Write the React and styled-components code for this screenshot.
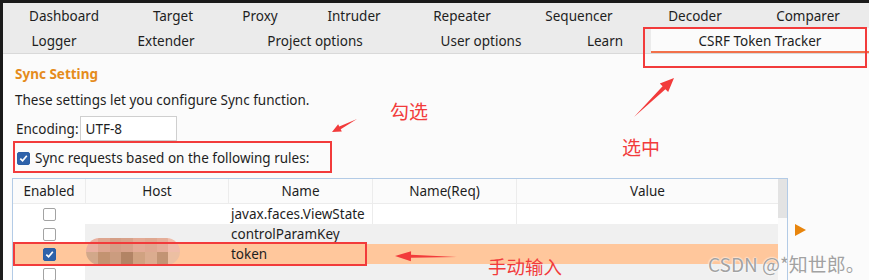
import React from "react"
import styled, { createGlobalStyle } from "styled-components"

const GlobalStyle = createGlobalStyle`
  html, body {
    margin: 0;
    padding: 0;
    overflow: hidden;
    background: #1a1a1a;
  }
`

const UI = `"Noto Sans", "Open Sans", sans-serif`
const CJK = `"Noto Sans CJK SC", "Noto Sans", sans-serif`
const RED = "#f23b3b"

const Page = styled.div`
  position: relative;
  width: 869px;
  height: 280px;
  box-sizing: border-box;
  padding: 3px 0 0 3px;
  background: #1a1a1a;
  overflow: hidden;
`

const Screen = styled.div`
  width: 866px;
  height: 277px;
  background: #fbfbfb;
  font-family: ${UI};
  color: #1e1e1e;
  display: flex;
  flex-direction: column;
`

const TabStrip = styled.div`
  background: #ebebeb;
  border-bottom: 1px solid #d9d9d9;
  display: flex;
  flex-direction: column;
`

const TabRow = styled.div`
  display: grid;
  grid-template-columns: ${(p) => p.$cols};
  height: 25px;
`

const Tab = styled.div`
  display: flex;
  align-items: center;
  justify-content: center;
  font-size: 13.5px;
  background: ${(p) => (p.$active ? "#fbfbfb" : "transparent")};
  box-sizing: border-box;
  border-bottom: 2px solid ${(p) => (p.$active ? "#f27049" : "transparent")};
  padding-top: 2px;
`

const Content = styled.div`
  display: flex;
  flex-direction: column;
  padding-left: 12px;
`

const SectionTitle = styled.div`
  margin-top: 10px;
  line-height: 20px;
  font-size: 13.5px;
  font-weight: 700;
  color: #e58c1c;
`

const Description = styled.div`
  margin-top: 6px;
  line-height: 20px;
  font-size: 13.5px;
`

const FieldRow = styled.div`
  margin-top: 6px;
  height: 25px;
  display: flex;
  align-items: center;
  font-size: 13.5px;
  padding-left: 1px;
`

const TextInput = styled.div`
  width: 97px;
  height: 25px;
  box-sizing: border-box;
  border: 1px solid #cfcfcf;
  background: #fff;
  display: flex;
  align-items: center;
  padding-left: 5px;
  margin-left: 1px;
`

const CheckRow = styled.label`
  margin-top: 7px;
  height: 20px;
  display: flex;
  align-items: center;
  gap: 5px;
  font-size: 13.5px;
  padding-left: 2px;
`

const Box = styled.span`
  width: 13px;
  height: 13px;
  box-sizing: border-box;
  border-radius: 2px;
  border: 1px solid ${(p) => (p.$checked ? "#2b5fa6" : "#a3a3a3")};
  background: ${(p) => (p.$checked ? "#2e62aa" : "#fff")};
  display: inline-flex;
  align-items: center;
  justify-content: center;
  flex: none;
`

const TableArea = styled.div`
  margin-top: 10px;
  margin-left: -3px;
  display: flex;
  gap: 7px;
`

const Table = styled.div`
  width: 776px;
  height: 110px;
  box-sizing: border-box;
  border: 1px solid #b3cbe6;
  border-bottom: none;
  display: flex;
  background: #fbfbfb;
`

const Grid = styled.div`
  width: 765px;
  display: flex;
  flex-direction: column;
`

const Cols = "72px 143px 144px 144px 262px"

const HeaderRow = styled.div`
  display: grid;
  grid-template-columns: ${Cols};
  height: 25px;
  background: #fbfbfb;
  border-bottom: 1px solid #ececec;
  box-sizing: border-box;
`

const HeaderCell = styled.div`
  display: flex;
  align-items: center;
  justify-content: center;
  font-size: 13.5px;
  border-left: ${(p) => (p.$first ? "none" : "1px solid #ececec")};
`

const Row = styled.div`
  display: grid;
  grid-template-columns: ${Cols};
  height: 20px;
  background: ${(p) => (p.$selected ? "#ffc79c" : p.$striped ? "#f0f0f0" : "#ffffff")};
`

const Cell = styled.div`
  display: flex;
  align-items: center;
  justify-content: ${(p) => (p.$center ? "center" : "flex-start")};
  padding-left: ${(p) => (p.$center ? "0" : "3px")};
  font-size: 13.5px;
  background: ${(p) => (p.$plain ? "#ffffff" : "transparent")};
  border-left: ${(p) => (p.$line ? "1px solid #ececec" : "none")};
`

const Scrollbar = styled.div`
  width: 9px;
  display: flex;
  flex-direction: column;
`

const Thumb = styled.div`
  height: 39px;
  background: #e3e3e3;
`

const SideButtons = styled.div`
  padding-top: 46px;
`

const PlayArrow = styled.div`
  width: 0;
  height: 0;
  border-top: 6px solid transparent;
  border-bottom: 6px solid transparent;
  border-left: 11px solid #e8850c;
`

const Highlight = styled.div`
  position: absolute;
  left: ${(p) => p.$x}px;
  top: ${(p) => p.$y}px;
  width: ${(p) => p.$w}px;
  height: ${(p) => p.$h}px;
  box-sizing: border-box;
  border: 2px solid ${RED};
  pointer-events: none;
`

const Note = styled.div`
  position: absolute;
  left: ${(p) => p.$x}px;
  top: ${(p) => p.$y}px;
  font-family: ${CJK};
  font-size: ${(p) => p.$size || 19}px;
  line-height: 1;
  color: ${RED};
  white-space: nowrap;
`

const Watermark = styled.div`
  position: absolute;
  left: 708px;
  top: 254px;
  font-family: ${CJK};
  font-size: 19px;
  line-height: 1;
  color: #a2a2a2;
  text-shadow: 0 0 2px #fff, 0 0 2px #fff;
  white-space: nowrap;
`

const Mosaic = styled.div`
  position: absolute;
  left: 86px;
  top: 238px;
  width: 94px;
  height: 27px;
  border-radius: 14px;
  overflow: hidden;
  display: grid;
  grid-template-columns: repeat(8, 1fr);
  grid-template-rows: 1fr 1fr;
  filter: blur(0.4px);
`

const Tile = styled.div`
  background: ${(p) => p.$c};
`

const Overlay = styled.svg`
  position: absolute;
  left: 0;
  top: 0;
  pointer-events: none;
`

const mosaicColors = [
  "#eab0a0", "#dea690", "#d49f87", "#d8a28b", "#e3ab96", "#dfa891", "#e5ae99", "#f0bcaa",
  "#d2a88a", "#c39371", "#cb9c7f", "#b28465", "#d0a281", "#dbac8f", "#c29474", "#ecbfa2",
]

// tapered annotation arrow from tail to tip
const arrowPoints = (x1, y1, x2, y2, head, half, shaft) => {
  const dx = x2 - x1
  const dy = y2 - y1
  const len = Math.hypot(dx, dy)
  const ux = dx / len
  const uy = dy / len
  const nx = -uy
  const ny = ux
  const bx = x2 - ux * head
  const by = y2 - uy * head
  const pts = [
    [x1, y1],
    [bx + nx * shaft, by + ny * shaft],
    [bx + nx * half, by + ny * half],
    [x2, y2],
    [bx - nx * half, by - ny * half],
    [bx - nx * shaft, by - ny * shaft],
  ]
  return pts.map((p) => p.join(",")).join(" ")
}

const CheckMark = () => (
  <svg width="9" height="9" viewBox="0 0 9 9">
    <path d="M1.3 4.6 L3.6 6.8 L7.8 1.8" fill="none" stroke="#fff" strokeWidth="1.7" />
  </svg>
)

const Check = ({ checked }) => <Box $checked={checked}>{checked && <CheckMark />}</Box>

const rows = [
  { name: "javax.faces.ViewState", checked: false },
  { name: "controlParamKey", checked: false, striped: true },
  { name: "token", checked: true, selected: true },
  { name: "", checked: false, striped: true },
]

const App = () => {
  return (
    <Page>
      <GlobalStyle />
      <Screen>
        <TabStrip>
          <TabRow $cols="122px 96px 78px 110px 106px 128px 104px 122px">
            {["Dashboard", "Target", "Proxy", "Intruder", "Repeater", "Sequencer", "Decoder", "Comparer"].map((t) => (
              <Tab key={t}>{t}</Tab>
            ))}
          </TabRow>
          <TabRow $cols="102px 122px 176px 156px 92px 218px">
            {["Logger", "Extender", "Project options", "User options", "Learn"].map((t) => (
              <Tab key={t}>{t}</Tab>
            ))}
            <Tab $active>CSRF Token Tracker</Tab>
          </TabRow>
        </TabStrip>

        <Content>
          <SectionTitle>Sync Setting</SectionTitle>
          <Description>These settings let you configure Sync function.</Description>
          <FieldRow>
            Encoding:
            <TextInput>UTF-8</TextInput>
          </FieldRow>
          <CheckRow>
            <Check checked />
            Sync requests based on the following rules:
          </CheckRow>

          <TableArea>
            <Table>
              <Grid>
                <HeaderRow>
                  <HeaderCell $first>Enabled</HeaderCell>
                  <HeaderCell>Host</HeaderCell>
                  <HeaderCell>Name</HeaderCell>
                  <HeaderCell>Name(Req)</HeaderCell>
                  <HeaderCell>Value</HeaderCell>
                </HeaderRow>
                {rows.map((r, i) => (
                  <Row key={i} $striped={r.striped} $selected={r.selected}>
                    <Cell $center $plain={!r.selected}>
                      <Check checked={r.checked} />
                    </Cell>
                    <Cell />
                    <Cell>{r.name}</Cell>
                    <Cell $line={i === 0} />
                    <Cell $line={i === 0} />
                  </Row>
                ))}
              </Grid>
              <Scrollbar>
                <Thumb />
              </Scrollbar>
            </Table>
            <SideButtons>
              <PlayArrow />
            </SideButtons>
          </TableArea>
        </Content>
      </Screen>

      <Mosaic>
        {mosaicColors.map((c, i) => (
          <Tile key={i} $c={c} />
        ))}
      </Mosaic>

      <Highlight $x={643} $y={27} $w={224} $h={41} />
      <Highlight $x={13} $y={141} $w={319} $h={32} />
      <Highlight $x={13} $y={242} $w={354} $h={24} />

      <Overlay width="869" height="280">
        <polygon points={arrowPoints(357, 119, 332, 132, 9, 4, 1.5)} fill={RED} />
        <polygon points={arrowPoints(634, 117, 674, 78, 14, 6, 2)} fill={RED} />
        <polygon points={arrowPoints(457, 257, 395, 256, 16, 5, 1.5)} fill={RED} />
      </Overlay>

      <Note $x={390} $y={101}>勾选</Note>
      <Note $x={622} $y={137}>选中</Note>
      <Note $x={488} $y={257} $size={18.5}>手动输入</Note>

      <Watermark>CSDN @*知世郎。</Watermark>
    </Page>
  )
}

export default App
